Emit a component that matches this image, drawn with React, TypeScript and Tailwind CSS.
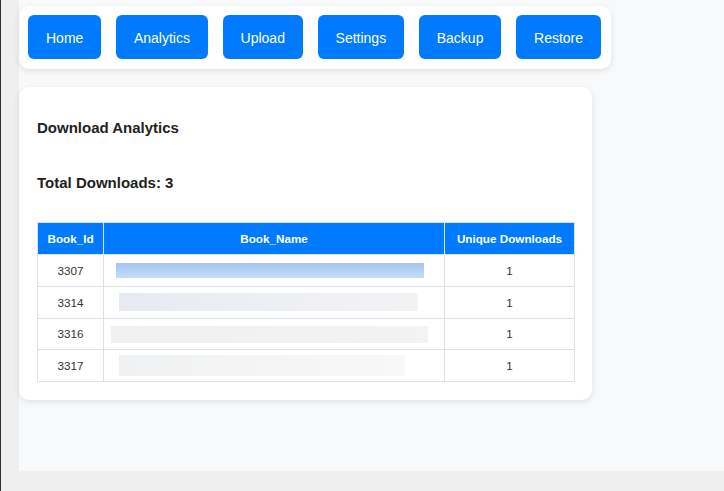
import React from "react";

const navItems = ["Home", "Analytics", "Upload", "Settings", "Backup", "Restore"];

interface Row {
  id: number;
  downloads: number;
  bar: string;
  barClass: string;
}

const rows: Row[] = [
  { id: 3307, downloads: 1, bar: "bg-gradient-to-b from-[#a4c6f1] to-[#c4dbf8]", barClass: "ml-[12px] w-[308px] h-[15px]" },
  { id: 3314, downloads: 1, bar: "bg-gradient-to-r from-[#e7ebf1] to-[#f2f3f5]", barClass: "ml-[15px] w-[299px] h-[18px]" },
  { id: 3316, downloads: 1, bar: "bg-gradient-to-r from-[#f0f0f0] to-[#f3f3f3]", barClass: "ml-[7px] w-[317px] h-[17px]" },
  { id: 3317, downloads: 1, bar: "bg-gradient-to-r from-[#f0f1f2] to-[#f8f8f8]", barClass: "ml-[15px] w-[286px] h-[21px]" },
];

const App: React.FC = () => {
  return <div className="min-h-screen bg-[#efefef] border-l border-[#2e2e2e] pl-[18px] font-['Liberation_Sans',Arial,sans-serif]">
      <div className="h-[471px] bg-[#f8f9fa] pt-[6px]">
        <nav className="inline-flex gap-[14.6px] bg-white rounded-[10px] pl-[9px] pt-[9px] pr-[10px] pb-[10px] shadow-[0_2px_6px_rgba(0,0,0,0.1)]">
          {navItems.map(item => <button key={item} className="h-[44.3px] px-[18px] pt-[2px] bg-[#007bff] text-white text-[14px] rounded-[6px]">
              {item}
            </button>)}
        </nav>
        <div className="mt-[18px] w-[573px] bg-white rounded-[10px] shadow-[0_2px_6px_rgba(0,0,0,0.1)] px-[18px] pt-[32px] pb-[18px] text-[#222]">
          <h3 className="text-[15px] leading-[17px] font-bold">Download Analytics</h3>
          <h3 className="mt-[38px] text-[15px] leading-[17px] font-bold">Total Downloads: 3</h3>
          <table className="mt-[31px] w-full table-fixed border-collapse text-[11.7px]">
            <colgroup>
              <col className="w-[66px]" />
              <col className="w-[341px]" />
              <col className="w-[130px]" />
            </colgroup>
            <thead>
              <tr className="bg-[#007bff] text-white">
                <th className="h-[31.8px] border border-[#dee2e6] font-bold">Book_Id</th>
                <th className="h-[31.8px] border border-[#dee2e6] font-bold">Book_Name</th>
                <th className="h-[31.8px] border border-[#dee2e6] font-bold">Unique Downloads</th>
              </tr>
            </thead>
            <tbody className="text-[#333]">
              {rows.map(row => <tr key={row.id}>
                  <td className="h-[31.8px] border border-[#dee2e6] text-center">{row.id}</td>
                  <td className="h-[31.8px] border border-[#dee2e6] p-0">
                    <div className={`${row.barClass} ${row.bar}`}></div>
                  </td>
                  <td className="h-[31.8px] border border-[#dee2e6] text-center">{row.downloads}</td>
                </tr>)}
            </tbody>
          </table>
        </div>
      </div>
    </div>;
};

export default App;
